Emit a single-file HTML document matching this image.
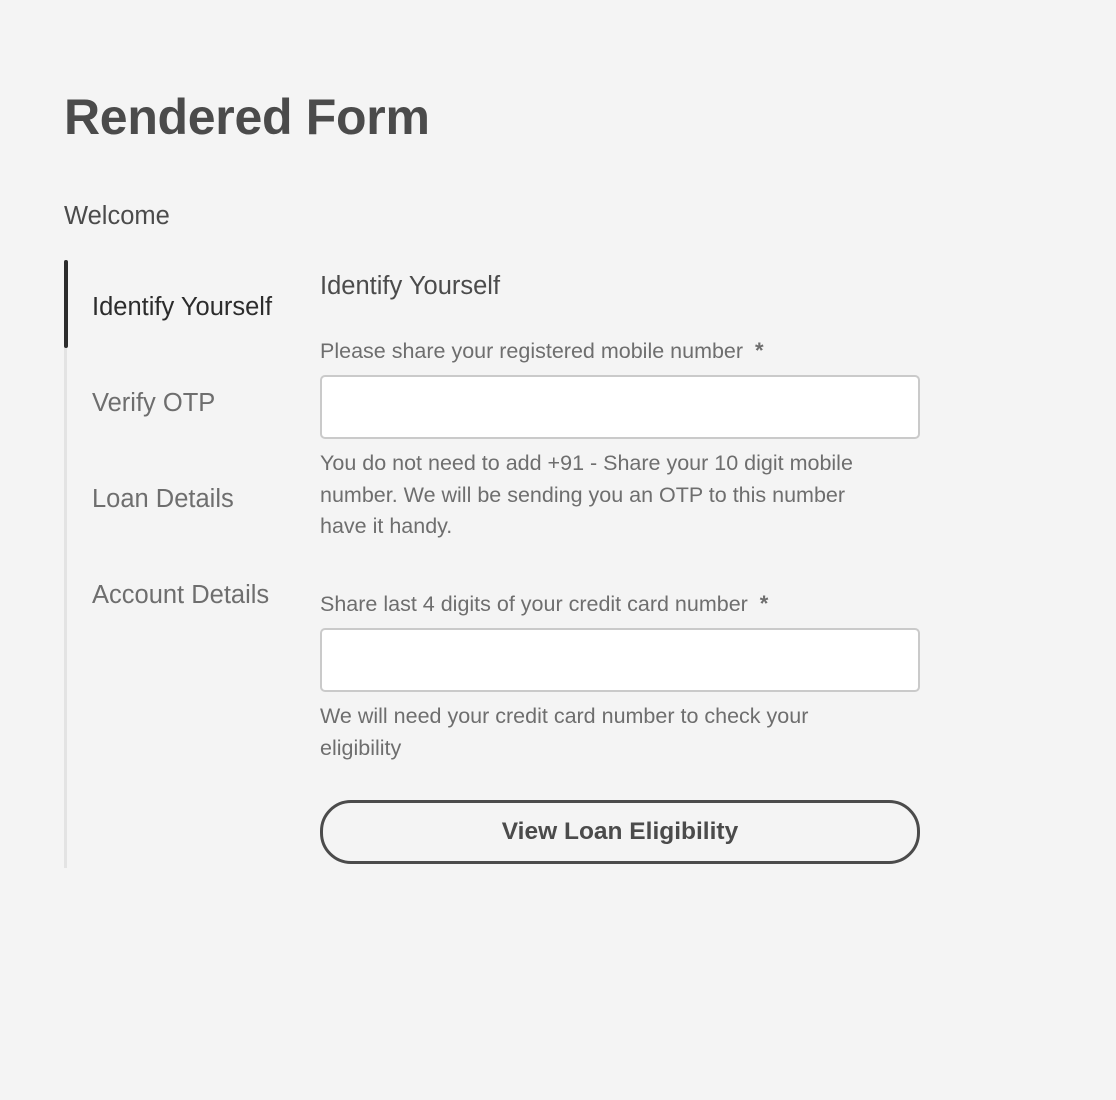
<!DOCTYPE html>
<html><head><style>
body{margin:0;background:#f4f4f4;width:1116px;height:1100px;font-family:"Liberation Sans",sans-serif;position:relative;overflow:hidden}
.a{position:absolute;white-space:nowrap}
h1{position:absolute;left:64px;top:88px;margin:0;font-size:50px;font-weight:bold;color:#4b4b4b;letter-spacing:-0.3px}
.nav{font-size:25.5px;color:#6e6e6e}
.lbl{font-size:21.5px;color:#6e6e6e}
.help{font-size:21.5px;color:#6e6e6e;line-height:31.5px;white-space:normal;width:548px}
.inp{position:absolute;left:320px;width:596px;height:60px;border:2px solid #cacaca;border-radius:5px;background:#fff}
</style></head><body>
<h1>Rendered Form</h1>
<div class="a nav" style="left:64px;top:202px;color:#4b4b4b">Welcome</div>
<div style="position:absolute;left:64px;top:260px;width:3px;height:608px;background:#e3e3e3"></div>
<div style="position:absolute;left:64px;top:260px;width:4px;height:88px;background:#2c2c2c;border-radius:2px"></div>
<div class="a nav" style="left:92px;top:293px;color:#2c2c2c">Identify Yourself</div>
<div class="a nav" style="left:92px;top:389px">Verify OTP</div>
<div class="a nav" style="left:92px;top:485px">Loan Details</div>
<div class="a nav" style="left:92px;top:581px">Account Details</div>
<div class="a nav" style="left:320px;top:272px;color:#4b4b4b">Identify Yourself</div>
<div class="a lbl" style="left:320px;top:338px">Please share your registered mobile number &nbsp;<b style="font-size:22px">*</b></div>
<div class="inp" style="top:375px"></div>
<div class="a help" style="left:320px;top:448px">You do not need to add +91 - Share your 10 digit mobile number. We will be sending you an OTP to this number have it handy.</div>
<div class="a lbl" style="left:320px;top:591px">Share last 4 digits of your credit card number &nbsp;<b style="font-size:22px">*</b></div>
<div class="inp" style="top:628px"></div>
<div class="a help" style="left:320px;top:701px">We will need your credit card number to check your eligibility</div>
<div style="position:absolute;left:320px;top:800px;width:594px;height:58px;border:3px solid #4b4b4b;border-radius:31px;display:flex;align-items:center;justify-content:center;font-size:24.5px;font-weight:bold;color:#4b4b4b">View Loan Eligibility</div>
</body></html>
